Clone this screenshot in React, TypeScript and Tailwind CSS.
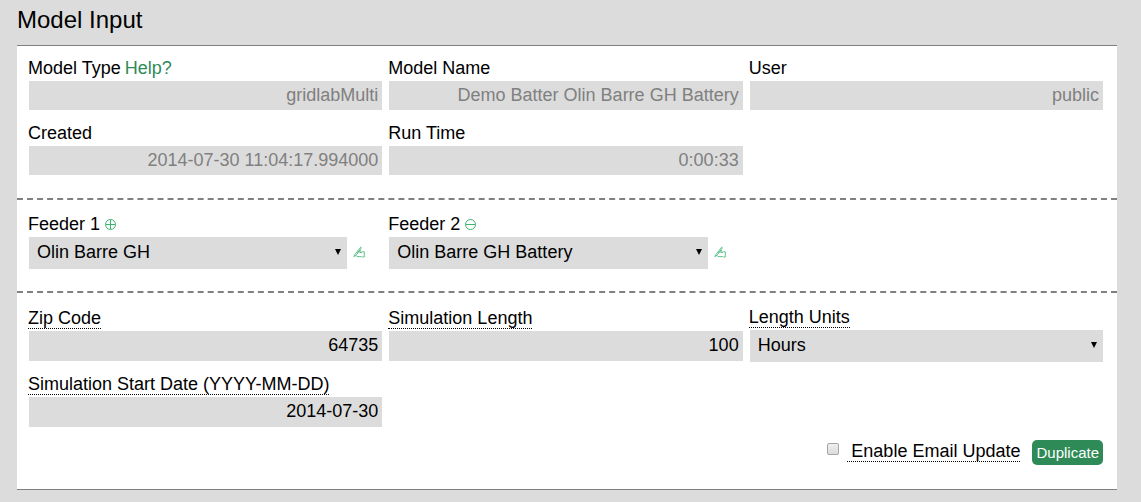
import { useState } from "react";
import type { ReactNode } from "react";

const inputBase = "block w-full rounded-none border-0 px-1 py-0 bg-[#dcdcdc] text-right text-lg outline-none";

function Field({
  id,
  label,
  extra,
  dotted,
  children,
}: {
  id: string;
  label: string;
  extra?: ReactNode;
  dotted?: boolean;
  children: ReactNode;
}) {
  return (
    <div className="min-w-0">
      <div className="flex h-6 items-start gap-1 leading-[22px]">
        <label htmlFor={id} className={dotted ? "h-[22px] border-b border-dotted border-black" : "h-[22px]"}>
          {label}
        </label>
        {extra}
      </div>
      <div className="pl-px">{children}</div>
    </div>
  );
}

function ReadOnlyField({ id, label, value, extra }: { id: string; label: string; value: string; extra?: ReactNode }) {
  return (
    <Field id={id} label={label} extra={extra}>
      <input id={id} type="text" readOnly value={value} className={inputBase + " h-[29px] text-[#808080]"} />
    </Field>
  );
}

function TextField({ id, label, initial }: { id: string; label: string; initial: string }) {
  const [value, setValue] = useState(initial);

  return (
    <Field id={id} label={label} dotted>
      <input
        id={id}
        type="text"
        value={value}
        onChange={(e) => setValue(e.target.value)}
        className={inputBase + " h-[30px] pb-[2px] text-black"}
      />
    </Field>
  );
}

function Select({ id, options }: { id: string; options: string[] }) {
  return (
    <div className="relative min-w-0 flex-1">
      <select
        id={id}
        defaultValue={options[0]}
        className="block h-8 w-full appearance-none rounded-none border-0 bg-[#dcdcdc] pl-2 pr-5 pb-[2px] text-lg text-black outline-none"
      >
        {options.map((option) => (
          <option key={option}>{option}</option>
        ))}
      </select>
      <svg viewBox="0 0 6 6" className="pointer-events-none absolute right-[6px] top-3 size-[6px]">
        <path d="M0 0h6L3 6z" fill="#000" />
      </svg>
    </div>
  );
}

function CircleButton({ title, plus }: { title: string; plus?: boolean }) {
  return (
    <button type="button" aria-label={title} className="mt-[6px] ml-px cursor-pointer">
      <svg viewBox="0 0 11 11" className="size-[11px]" fill="none" stroke="#3cb371">
        <circle cx="5.5" cy="5.5" r="5" />
        <path d={plus ? "M1 5.5h9M5.5 1v9" : "M1 5.5h9"} />
      </svg>
    </button>
  );
}

function EditButton({ title }: { title: string }) {
  return (
    <button type="button" aria-label={title} className="ml-[6px] w-[29px] cursor-pointer">
      {/* Writing hand */}
      <svg viewBox="0 0 12 12" className="mb-[2px] size-3" fill="none" stroke="#3cb371" strokeWidth="0.8">
        <path d="M8 0.8 1.8 8.6 0.8 10.6 3 9.4 8.6 1.6" />
        <path d="M4.4 6.6 7.4 4.6 8.2 5.2 6.8 6.6H9" />
        <path d="M3 9.4 4 10.6H8.8" />
        <path d="M9.2 5.8H11.3V11H9.2" />
      </svg>
    </button>
  );
}

function FeederField({ id, label, value, extra }: { id: string; label: string; value: string; extra: ReactNode }) {
  return (
    <Field id={id} label={label} extra={extra}>
      <div className="flex items-center">
        <Select id={id} options={[value]} />
        <EditButton title={"Edit " + label} />
      </div>
    </Field>
  );
}

export default function App() {
  const [emailUpdate, setEmailUpdate] = useState(false);

  return (
    <div className="min-h-screen bg-[#dcdcdc] pl-[17px] pr-6 pb-3 font-['Liberation_Sans',Arial,sans-serif] text-lg text-black">
      <h1 className="h-[45px] pt-1 text-2xl leading-8">Model Input</h1>

      <form className="border-y border-[#808080] bg-white" onSubmit={(e) => e.preventDefault()}>
        {/* Model info */}
        <div className="grid grid-cols-3 gap-x-1.5 gap-y-3 border-b-2 border-dashed border-[#808080] pt-[11px] pr-[14px] pb-[23px] pl-[11px]">
          <ReadOnlyField
            id="modelType"
            label="Model Type"
            value="gridlabMulti"
            extra={
              <a href="#help" className="text-[#2e8b57]">
                Help?
              </a>
            }
          />
          <ReadOnlyField id="modelName" label="Model Name" value="Demo Batter Olin Barre GH Battery" />
          <ReadOnlyField id="user" label="User" value="public" />
          <ReadOnlyField id="created" label="Created" value="2014-07-30 11:04:17.994000" />
          <ReadOnlyField id="runTime" label="Run Time" value="0:00:33" />
        </div>

        {/* Feeders */}
        <div className="grid grid-cols-3 gap-x-1.5 border-b-2 border-dashed border-[#808080] pt-[13px] pr-[14px] pb-[22px] pl-[11px]">
          <FeederField id="feeder1" label="Feeder 1" value="Olin Barre GH" extra={<CircleButton title="Add feeder" plus />} />
          <FeederField id="feeder2" label="Feeder 2" value="Olin Barre GH Battery" extra={<CircleButton title="Remove feeder" />} />
        </div>

        {/* Simulation settings */}
        <div className="pt-[13px] pr-[14px] pb-6 pl-[11px]">
          <div className="grid grid-cols-3 items-center gap-x-1.5 gap-y-[11px]">
            <TextField id="zipCode" label="Zip Code" initial="64735" />
            <TextField id="simLength" label="Simulation Length" initial="100" />
            <Field id="lengthUnits" label="Length Units" dotted>
              <Select id="lengthUnits" options={["Hours", "Minutes", "Days"]} />
            </Field>
            <TextField id="startDate" label="Simulation Start Date (YYYY-MM-DD)" initial="2014-07-30" />
          </div>

          <div className="mt-[13px] flex items-start justify-end">
            <input
              id="emailUpdate"
              type="checkbox"
              checked={emailUpdate}
              onChange={(e) => setEmailUpdate(e.target.checked)}
              className="mt-[3px] mr-2 size-3 appearance-none rounded-[2px] border border-[#a6a6a6] bg-linear-to-b from-[#efefef] to-[#dcdcdc] checked:bg-[#2e8b57]"
            />
            <label htmlFor="emailUpdate" className="mr-3 h-[22px] border-b border-dotted border-black pl-1 leading-[22px]">
              Enable Email Update
            </label>
            <button type="button" className="h-[25px] cursor-pointer rounded-[5px] bg-[#2e8b57] px-1 text-[15px] leading-6 text-white">
              Duplicate
            </button>
          </div>
        </div>
      </form>
    </div>
  );
}
